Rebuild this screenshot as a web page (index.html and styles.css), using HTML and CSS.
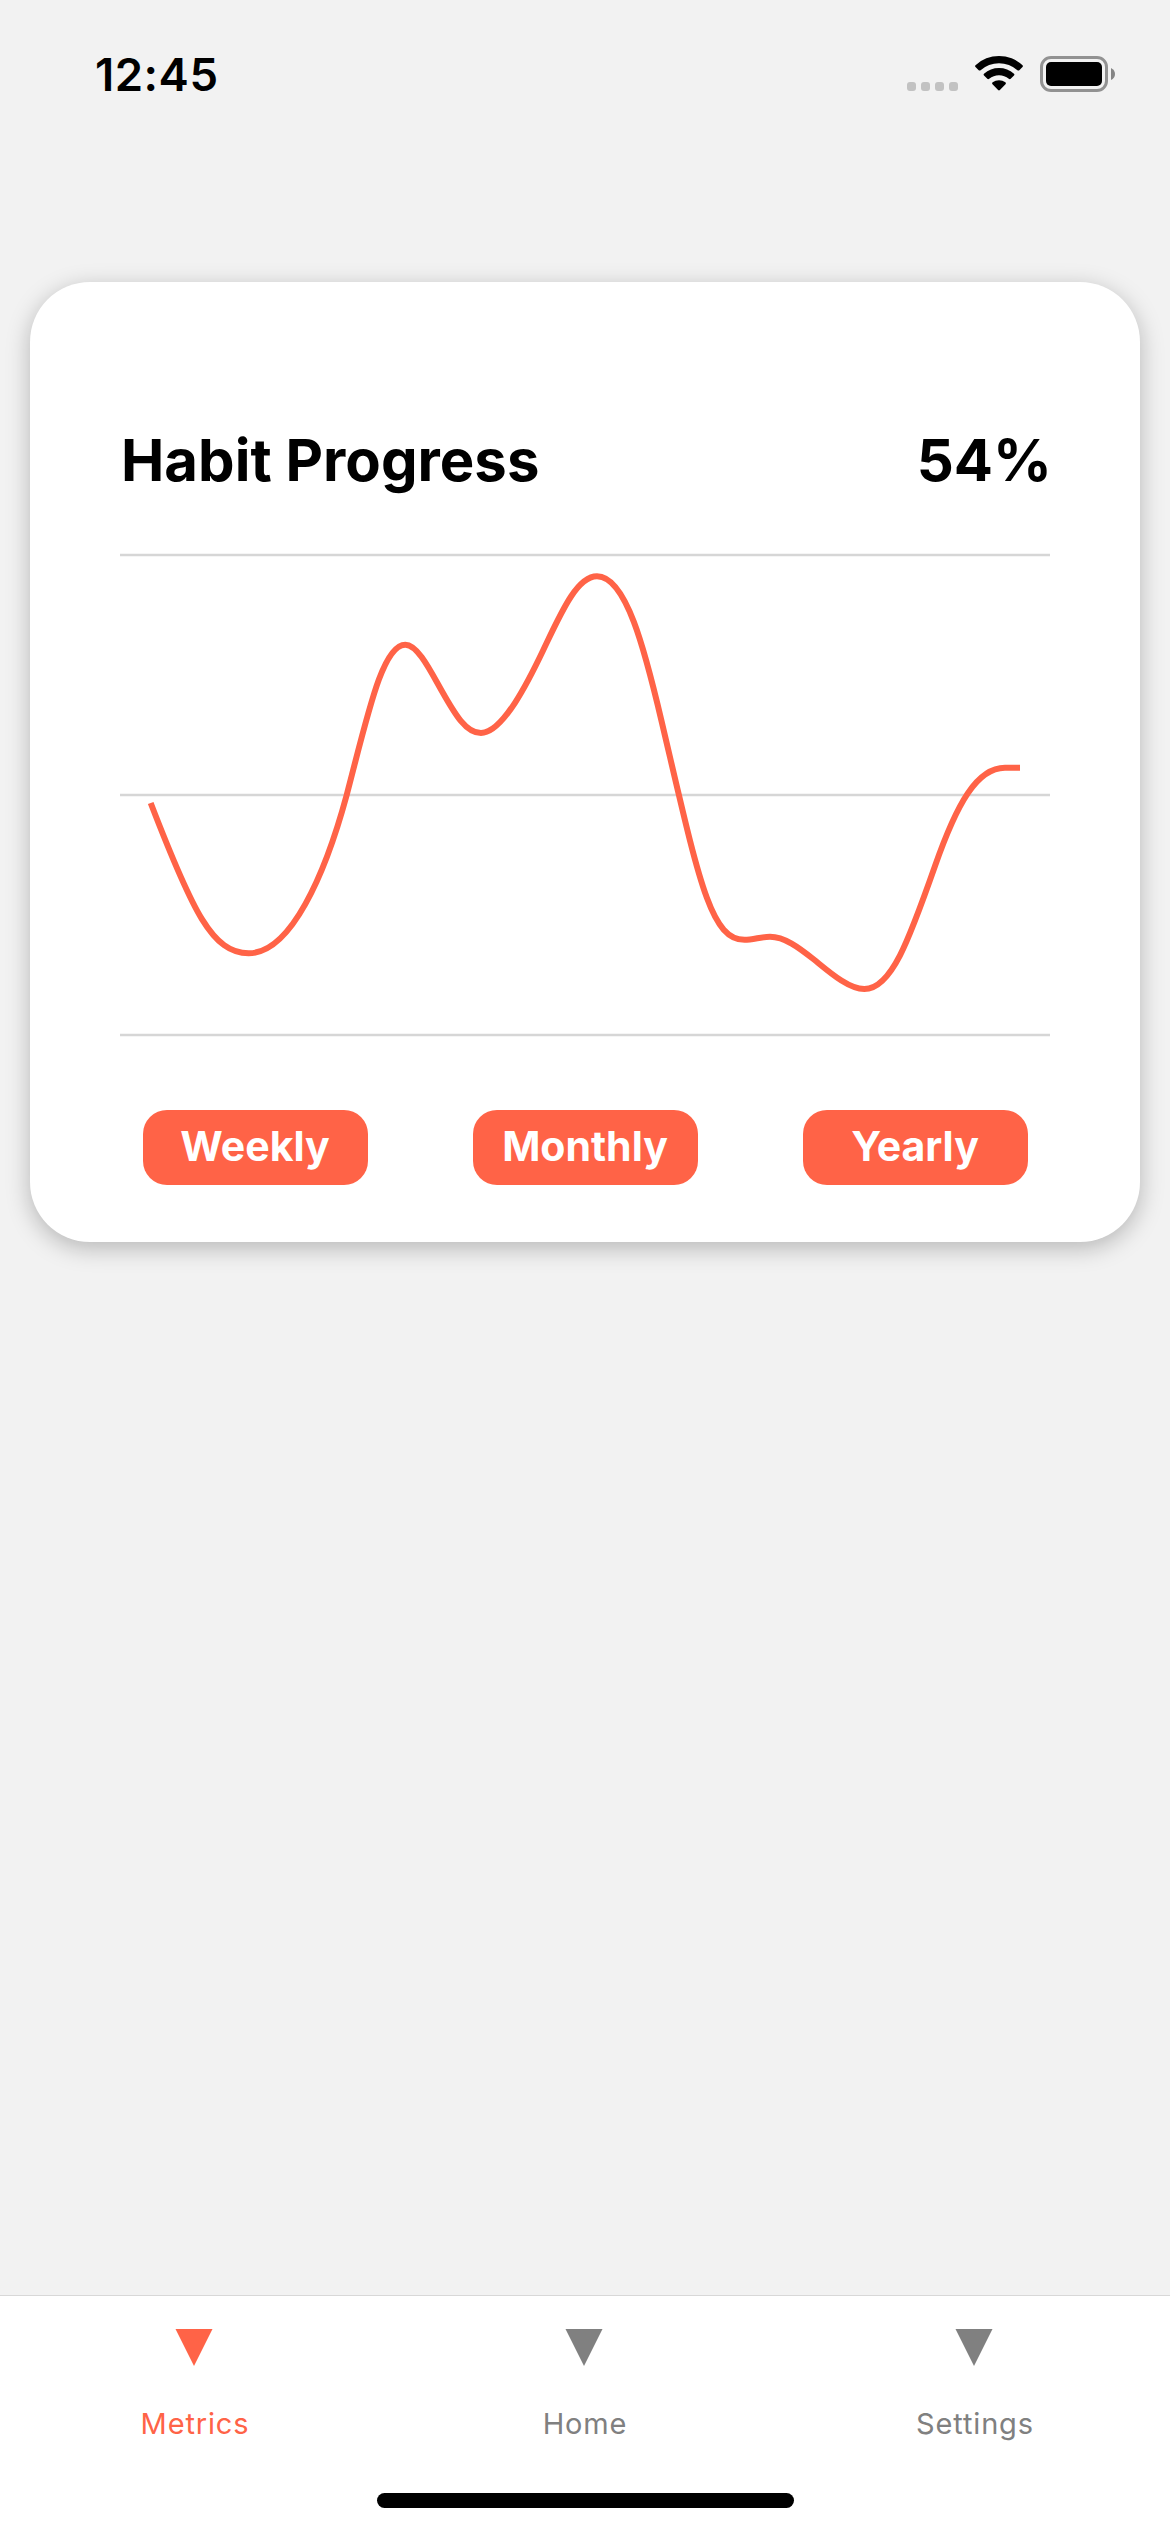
FILE: index.html
```html
<!DOCTYPE html>
<html lang="en">
<head>
<meta charset="utf-8">
<title>Habit Metrics</title>
<link rel="stylesheet" href="styles.css">
</head>
<body>
<div class="screen">
  <header class="status">
    <span class="time">12:45</span>
    <div class="status-icons">
      <svg class="signal" viewBox="0 0 51 9"><rect width="9" height="9" rx="3"/><rect x="14" width="9" height="9" rx="3"/><rect x="28" width="9" height="9" rx="3"/><rect x="42" width="9" height="9" rx="3"/></svg>
      <svg class="wifi" viewBox="0 0 48 36"><path d="M0.5 10.2A34.5 34.5 0 0 1 47.5 10.2Q48.4 11 47.5 12L44.3 15.2Q43.4 16 42.4 15.2A27.5 27.5 0 0 0 5.6 15.2Q4.6 16 3.7 15.2L0.5 12Q-0.4 11 0.5 10.2Z"/><path d="M9 18.7A22.5 22.5 0 0 1 39 18.7Q40 19.6 39 20.6L35.7 23.8Q34.8 24.6 33.8 23.8A15 15 0 0 0 14.2 23.8Q13.2 24.6 12.3 23.8L9 20.6Q8 19.6 9 18.7Z"/><path d="M17.6 27.3A10.6 10.6 0 0 1 30.4 27.3Q31.5 28.3 30.5 29.3L24.9 35Q24 35.9 23.1 35L17.5 29.3Q16.5 28.3 17.6 27.3Z"/></svg>
      <svg class="battery" viewBox="0 0 75 36"><rect class="shell" x="1.5" y="1.5" width="65" height="33" rx="9.5"/><rect x="6" y="6" width="56" height="24" rx="5"/><path class="nub" d="M71 12Q75 14 75 18T71 24Z"/></svg>
    </div>
  </header>
  <main class="content">
    <section class="card">
      <div class="card-head">
        <h1 class="title">Habit Progress</h1>
        <span class="percent">54%</span>
      </div>
      <svg class="chart" viewBox="120 550 930 490">
        <path class="grid" d="M120 555H1050M120 795H1050M120 1035H1050"/>
        <path class="line" d="M150.7 803C192.7 912.2 212.7 953.3 248.7 953.3C290.7 953.3 325 875 346.7 795C367.7 715.2 382.3 644.7 405.3 644.7C417.4 644.7 429.6 669.2 441.7 690.7C455.2 714.6 466 733 481 733C503 733 529.3 679.4 543.3 650C561.3 612.2 577 576.3 597 576.3C626 576.3 644.7 649.5 661.7 721.7C698.7 879 710 939.8 744.5 939.8C753 939.8 761.5 936.7 770 936.7C784.4 936.7 798.9 947.5 813.3 959C828 970.8 848 989 864.3 989C891.3 989 909 940.1 935 866C957 803.3 977 767.8 1005 767.8H1020"/>
      </svg>
      <div class="ranges">
        <button class="range">Weekly</button>
        <button class="range">Monthly</button>
        <button class="range">Yearly</button>
      </div>
    </section>
  </main>
  <nav class="tabs">
    <a class="tab active"><svg class="marker" viewBox="0 0 38 38"><path d="M0 0H38L19 38Z"/></svg><span class="label">Metrics</span></a>
    <a class="tab"><svg class="marker" viewBox="0 0 38 38"><path d="M0 0H38L19 38Z"/></svg><span class="label">Home</span></a>
    <a class="tab"><svg class="marker" viewBox="0 0 38 38"><path d="M0 0H38L19 38Z"/></svg><span class="label">Settings</span></a>
    <div class="home-indicator"></div>
  </nav>
</div>
</body>
</html>
```
FILE: styles.css
```css
* { box-sizing: border-box; }
body {
  margin: 0;
  background: #f2f2f2;
  font-family: Inter, "Liberation Sans", sans-serif;
  color: #000;
}
svg { display: block; }
.screen {
  width: 1170px;
  height: 2532px;
  display: flex;
  flex-direction: column;
}
.status {
  height: 141px;
  padding: 45px 55px 0 95px;
  display: flex;
  justify-content: space-between;
  align-items: flex-start;
}
.time {
  font-size: 45.5px;
  line-height: 60px;
  font-weight: 600;
  letter-spacing: 0.5px;
}
.status-icons {
  display: flex;
  align-items: flex-end;
  gap: 17px;
  padding-top: 10px;
}
.signal { width: 51px; height: 9px; fill: #c2c2c2; margin-bottom: 1px; }
.wifi { width: 48px; height: 36px; margin-bottom: 1px; }
.battery { width: 75px; height: 36px; }
.shell { fill: none; stroke: #929292; stroke-width: 3; }
.nub { fill: #858585; }
.content {
  flex: 1;
  padding: 141px 30px 0;
}
.card {
  height: 960px;
  padding: 149px 90px 57px;
  border-radius: 60px;
  background: #fff;
  box-shadow: 0 6px 23px rgba(0, 0, 0, 0.25);
  display: flex;
  flex-direction: column;
}
.card-head {
  display: flex;
  justify-content: space-between;
  height: 119px;
}
.title, .percent {
  margin: 0;
  font-size: 58px;
  line-height: 58px;
  font-weight: 700;
}
.title { padding-left: 1px; letter-spacing: 0.03px; }
.percent { margin-right: -2px; }
.chart { width: 930px; height: 490px; }
.grid { fill: none; stroke: #d6d6d6; stroke-width: 2.6; }
.line { fill: none; stroke: #ff6347; stroke-width: 6; }
.ranges {
  margin-top: 70px;
  display: flex;
  justify-content: center;
  gap: 105px;
}
.range {
  width: 225px;
  height: 75px;
  padding: 0 0 2px;
  border: 0;
  border-radius: 24px;
  background: #ff6347;
  color: #fff;
  font: 700 41px/73px Inter, "Liberation Sans", sans-serif;
}
.tabs {
  position: relative;
  height: 237px;
  border-top: 1px solid #d8d8d8;
  background: #fff;
  display: grid;
  grid-template-columns: repeat(3, 1fr);
}
.tab {
  padding-top: 33px;
  display: flex;
  flex-direction: column;
  align-items: center;
  color: #808080;
}
.active { color: #ff6347; }
.marker { width: 38px; height: 37px; margin-right: 2px; fill: currentColor; }
.label {
  margin-top: 38px;
  font-size: 29px;
  line-height: 40px;
  letter-spacing: 0.85px;
}
.home-indicator {
  position: absolute;
  left: 377px;
  bottom: 24px;
  width: 417px;
  height: 15px;
  border-radius: 7.5px;
  background: #000;
}
```
